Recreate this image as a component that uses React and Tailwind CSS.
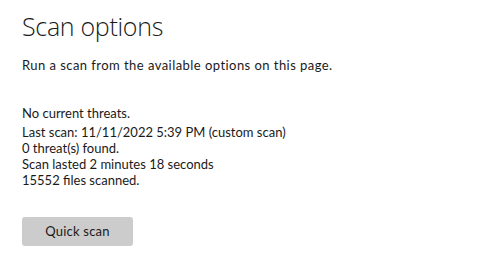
export default function App() {
  return (
    <div className="w-[500px] h-[261px] bg-white pl-[22px] pt-[8px] text-[#1a1a1a]" style={{ fontFamily: 'Lato, "Open Sans", sans-serif' }}>
      <h1 className="text-[25px] font-light leading-[36px] tracking-[-0.3px]" style={{ fontFamily: '"Open Sans", sans-serif' }}>Scan options</h1>
      <p className="mt-[13px] text-[13px] leading-[16px] tracking-[0.45px]">Run a scan from the available options on this page.</p>

      {/* scan status */}
      <div className="mt-[32px] text-[13px] leading-[16px]">
        <div>No current threats.</div>
        <div className="mt-[3px]">Last scan: 11/11/2022 5:39 PM (custom scan)</div>
        <div>0 threat(s) found.</div>
        <div>Scan lasted 2 minutes 18 seconds</div>
        <div>15552 files scanned.</div>
      </div>

      <button className="mt-[29px] w-[111px] h-[29px] rounded-[3px] bg-[#cccccc] text-[13px] text-[#1a1a1a] tracking-[0.2px]">
        Quick scan
      </button>
    </div>
  );
}
